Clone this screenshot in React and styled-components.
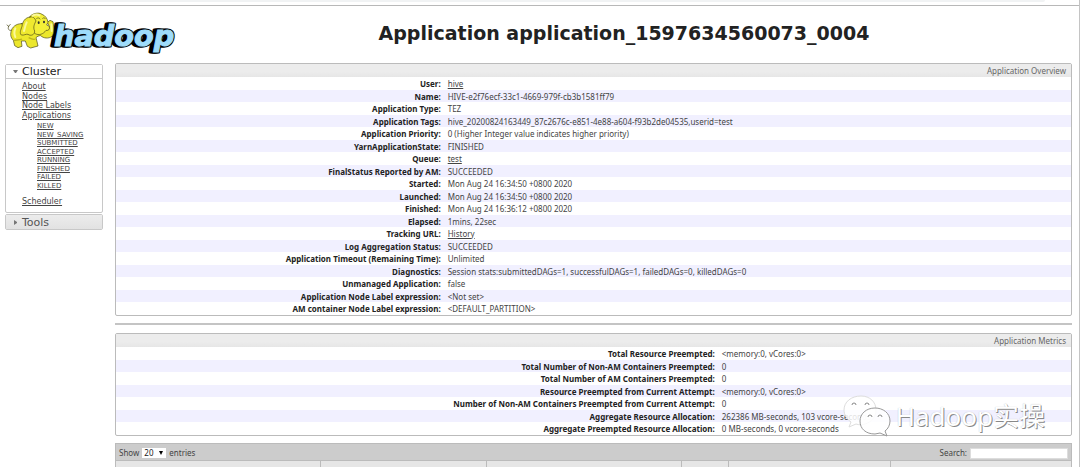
import React from "react";
import styled, { createGlobalStyle } from "styled-components";

const Global = createGlobalStyle`
  * { box-sizing: border-box; }
  body {
    margin: 0;
    background: #fff;
    color: #444;
    font: 8px/12px "Noto Sans", "Noto Sans CJK SC", sans-serif;
  }
  a { color: inherit; text-decoration: underline; }
  ul { list-style: none; margin: 0; padding: 0; }
`;

const Page = styled.div`
  position: relative;
  border-right: 1px solid #c4c4c4;
`;

const BrowserEdge = styled.div`
  height: 6px;
  padding: 0 34px 0 60px;
  border-bottom: 1px solid #b8b8b8;
`;

const AddressBar = styled.div`
  height: 2px;
  border-radius: 0 0 4px 4px;
  background: #f1f3f4;
`;

const Header = styled.header`
  display: grid;
  grid-template-columns: 164px 1fr;
  align-items: center;
  height: 57px;
  padding: 0 0 4px 5px;
`;

const Logo = styled.svg`
  display: block;
  width: 172px;
  height: 44px;
`;

const Title = styled.h1`
  margin: 0;
  text-align: center;
  font: bold 19px/24px "DejaVu Sans", sans-serif;
  color: #222;
`;

const Columns = styled.div`
  display: grid;
  grid-template-columns: 98px minmax(0, 1fr);
  gap: 12px;
  padding: 0 7px 0 5px;
  align-items: start;
`;

const Sidebar = styled.nav`
  display: flex;
  flex-direction: column;
  gap: 1px;
  padding-top: 1px;
  font-family: "DejaVu Sans", sans-serif;
`;

const Section = styled.section`
  border: 1px solid #c8c8c8;
  border-radius: 2px;
`;

const SectionButton = styled.button`
  display: flex;
  align-items: center;
  gap: 4px;
  width: 100%;
  height: 14px;
  padding: 0 0 0 7px;
  border: 0;
  border-bottom: ${(p) => (p.$open ? "1px solid #c8c8c8" : "0")};
  background: ${(p) => (p.$open ? "#fff" : "linear-gradient(#ececec, #e2e2e2)")};
  color: ${(p) => (p.$open ? "#222" : "#555")};
  font: 11px/13px "DejaVu Sans", sans-serif;
`;

const Arrow = styled.svg`
  width: 5px;
  height: 5px;
  fill: #777;
`;

const MenuList = styled.ul`
  padding: 3px 0 5px 16px;
  font-size: 8px;
`;

const MenuItem = styled.li`
  line-height: 10px;
  &:nth-child(even) { line-height: 9px; }
  &:last-child { line-height: 10px; }
`;

const StateList = styled.ul`
  padding: 2px 0 7px 15px;
  font-size: 7px;
`;

const StateItem = styled.li`
  line-height: 9px;
  &:nth-child(even) { line-height: 8px; }
`;

const Panel = styled.section`
  overflow: hidden;
  border: 1px solid #bbb;
  border-radius: 2px;
  background: #fff;
`;

const PanelTitle = styled.h2`
  margin: 0;
  height: 13px;
  padding: 0 5px;
  background: linear-gradient(#ececec 60%, #e6e6e6);
  text-align: right;
  font: 8px/14px "Noto Sans", sans-serif;
  color: #666;
`;

const InfoTable = styled.table`
  width: 100%;
  table-layout: fixed;
  border-collapse: collapse;
`;

const Label = styled.th`
  width: ${(p) => p.$width};
  padding: 0;
  text-align: right;
  white-space: nowrap;
  line-height: 12px;
  color: #222;
`;

const Value = styled.td`
  padding: 0 0 0 7px;
  white-space: nowrap;
  line-height: 12px;
`;

const InfoRow = styled.tr`
  height: 13px;
  &:nth-child(even) { height: 12px; background: #f1f0ff; }
  &:nth-child(even) > ${Label}, &:nth-child(even) > ${Value} { padding-top: 2px; line-height: 10px; }
`;

const Divider = styled.hr`
  height: 2px;
  margin: 7px 0 8px;
  border: 0;
  background: #c4c4c4;
`;

const Toolbar = styled.div`
  display: flex;
  justify-content: space-between;
  align-items: center;
  height: 17px;
  margin-top: 7px;
  padding: 2px 3px 0;
  border: 1px solid #bbb;
  border-bottom: 0;
  background: #ccc;
`;

const Field = styled.label`
  display: flex;
  align-items: center;
  gap: 3px;
  line-height: 12px;
`;

const SelectWrap = styled.span`
  position: relative;
  display: flex;
`;

const PageSize = styled.select`
  appearance: none;
  width: 24px;
  height: 10px;
  padding: 0 2px;
  border: 0;
  border-radius: 0;
  background: #fff;
  color: #222;
  font: 8px/10px "Noto Sans", sans-serif;
`;

const SelectArrow = styled.svg`
  position: absolute;
  right: 3px;
  top: 3px;
  width: 4px;
  height: 4px;
  pointer-events: none;
`;

const Search = styled.input`
  width: 98px;
  height: 11px;
  padding: 0 2px;
  border: 1px solid #ddd;
  background: #fff;
  font: 8px/10px "Noto Sans", sans-serif;
`;

const AttemptsTable = styled.table`
  width: 100%;
  table-layout: fixed;
  border-collapse: collapse;
`;

const HeadCell = styled.th`
  width: ${(p) => p.$width};
  height: 7px;
  padding: 0;
  border: 1px solid #bbb;
  border-bottom: 0;
  background: #e6e6e6;
`;

const Watermark = styled.div`
  position: absolute;
  right: 34px;
  top: 394px;
  display: flex;
  align-items: center;
  gap: 4px;
  font: 26px/44px "Noto Sans", "Noto Sans CJK SC", sans-serif;
  color: #fff;
  text-shadow: 1px 1px 0 #888, 0 0 1px #bbb;
  white-space: nowrap;
  pointer-events: none;
`;

const WatermarkIcon = styled.svg`
  width: 50px;
  height: 44px;
`;

const STATES = ["NEW", "NEW_SAVING", "SUBMITTED", "ACCEPTED", "RUNNING", "FINISHED", "FAILED", "KILLED"];

const OVERVIEW = [
  ["User", "hive", true],
  ["Name", "HIVE-e2f76ecf-33c1-4669-979f-cb3b1581ff79"],
  ["Application Type", "TEZ"],
  ["Application Tags", "hive_20200824163449_87c2676c-e851-4e88-a604-f93b2de04535,userid=test"],
  ["Application Priority", "0 (Higher Integer value indicates higher priority)"],
  ["YarnApplicationState", "FINISHED"],
  ["Queue", "test", true],
  ["FinalStatus Reported by AM", "SUCCEEDED"],
  ["Started", "Mon Aug 24 16:34:50 +0800 2020"],
  ["Launched", "Mon Aug 24 16:34:50 +0800 2020"],
  ["Finished", "Mon Aug 24 16:36:12 +0800 2020"],
  ["Elapsed", "1mins, 22sec"],
  ["Tracking URL", "History", true],
  ["Log Aggregation Status", "SUCCEEDED"],
  ["Application Timeout (Remaining Time)", "Unlimited"],
  ["Diagnostics", "Session stats:submittedDAGs=1, successfulDAGs=1, failedDAGs=0, killedDAGs=0"],
  ["Unmanaged Application", "false"],
  ["Application Node Label expression", "<Not set>"],
  ["AM container Node Label expression", "<DEFAULT_PARTITION>"],
];

const METRICS = [
  ["Total Resource Preempted", "<memory:0, vCores:0>"],
  ["Total Number of Non-AM Containers Preempted", "0"],
  ["Total Number of AM Containers Preempted", "0"],
  ["Resource Preempted from Current Attempt", "<memory:0, vCores:0>"],
  ["Number of Non-AM Containers Preempted from Current Attempt", "0"],
  ["Aggregate Resource Allocation", "262386 MB-seconds, 103 vcore-seconds"],
  ["Aggregate Preempted Resource Allocation", "0 MB-seconds, 0 vcore-seconds"],
];

const ATTEMPT_COLUMNS = [
  ["Attempt ID", "21.4%"],
  ["Started", "17.4%"],
  ["Node", "20.4%"],
  ["Logs", "4.9%"],
  ["Nodes blacklisted by the app", "17%"],
  ["Nodes blacklisted by the system", "auto"],
];

function Info({ title, rows, labelWidth }) {
  return (
    <Panel>
      <PanelTitle>{title}</PanelTitle>
      <InfoTable>
        <tbody>
          {rows.map(([name, value, link]) => (
            <InfoRow key={name}>
              <Label scope="row" $width={labelWidth}>{name}:</Label>
              <Value>{link ? <a href="#">{value}</a> : value}</Value>
            </InfoRow>
          ))}
        </tbody>
      </InfoTable>
    </Panel>
  );
}

function HadoopLogo() {
  return (
    <Logo viewBox="15 24 516 132" role="img" aria-label="hadoop">
      <defs>
        <text id="wordmark" x="162" y="128" fontFamily="DejaVu Sans" fontWeight="bold" fontStyle="italic" fontSize="86">
          hadoop
        </text>
      </defs>
      <g stroke="#000" strokeWidth="9" strokeLinejoin="round">
        <use href="#wordmark" x="-10" y="2" />
        <use href="#wordmark" x="-5" y="1" />
        <use href="#wordmark" />
      </g>
      <use href="#wordmark" fill="#9edcfb" stroke="#9edcfb" strokeWidth="3" />
      <g stroke="#4a4818" strokeWidth="2" strokeLinejoin="round" strokeLinecap="round">
        <path d="M36 82C26 84 22 78 26 70M26 70l-5-4M26 70l5-6" fill="none" />
        <path
          d="M64 62C48 62 36 72 33 86C30 98 34 106 40 112L44 128L54 134L66 130L64 114L76 114L82 130L92 135L114 129L112 120L108 104C112 100 116 98 122 98C130 106 146 108 156 100C163 90 162 74 159 56L150 52L142 58L148 70C148 80 142 82 136 78C120 70 90 60 64 62Z"
          fill="#ece72c"
        />
        <path d="M88 44C92 32 116 26 126 34C136 38 142 46 144 58L140 66L148 70C150 78 146 84 138 82C130 94 116 98 106 92C96 86 92 70 88 44Z" fill="#f3ef38" />
        <path d="M90 42C74 44 68 56 66 70C62 82 58 90 64 96C72 98 78 92 84 94C92 100 104 96 104 84C98 72 104 62 108 54C104 44 98 40 90 42Z" fill="#efe92f" />
        <path d="M110 46C114 44 118 44 120 48M128 46C131 43 134 44 136 47" fill="none" />
      </g>
      <path d="M80 58C76 66 74 76 72 84M46 76C42 86 42 94 46 102M98 38C106 33 112 33 118 37M154 64L155 84" fill="none" stroke="#fbf99a" strokeWidth="6" strokeLinecap="round" />
      <path d="M42 112C50 110 58 112 66 108M86 104C94 108 102 110 106 108" fill="none" stroke="#b9b11d" strokeWidth="4" />
      <ellipse cx="116" cy="59" rx="3" ry="4" fill="#333" />
      <ellipse cx="132" cy="57" rx="3" ry="4" fill="#333" />
    </Logo>
  );
}

function WeChatMark() {
  return (
    <WatermarkIcon viewBox="0 0 50 44" aria-hidden="true">
      <g fill="#fff" fillOpacity="0.85" strokeLinejoin="round">
        <path d="M19 2C9 2 2 8 2 16c0 5 3 9 7 12l-2 5 7-3c3 1 6 1 9 0 7-2 11-8 11-14C34 8 28 2 19 2Z" stroke="#ddd" />
        <path d="M33 14c-9 0-15 6-15 13 0 8 6 13 15 13l5-1 7 3-2-5c3-2 5-6 5-10 0-8-7-13-15-13Z" stroke="#999" />
      </g>
      <g fill="none" stroke="#888">
        <path d="M10 11a2 2 0 0 1 4 0M23 11a2 2 0 0 1 4 0M26 23a2 2 0 0 1 4 0M36 23a2 2 0 0 1 4 0" />
      </g>
    </WatermarkIcon>
  );
}

export default function App() {
  return (
    <>
      <Global />
      <Page>
        <BrowserEdge><AddressBar /></BrowserEdge>
        <Header>
          <HadoopLogo />
          <Title>Application application_1597634560073_0004</Title>
        </Header>
        <Columns>
          <Sidebar>
            <Section>
              <SectionButton type="button" $open aria-expanded="true">
                <Arrow viewBox="0 0 5 5"><path d="M0 1h5L3 4H2z" /></Arrow>
                Cluster
              </SectionButton>
              <MenuList>
                <MenuItem><a href="#">About</a></MenuItem>
                <MenuItem><a href="#">Nodes</a></MenuItem>
                <MenuItem><a href="#">Node Labels</a></MenuItem>
                <MenuItem>
                  <a href="#">Applications</a>
                  <StateList>
                    {STATES.map((s) => <StateItem key={s}><a href="#">{s}</a></StateItem>)}
                  </StateList>
                </MenuItem>
                <MenuItem><a href="#">Scheduler</a></MenuItem>
              </MenuList>
            </Section>
            <Section>
              <SectionButton type="button" aria-expanded="false">
                <Arrow viewBox="0 0 5 5"><path d="M1 0v5L4 3V2z" /></Arrow>
                Tools
              </SectionButton>
            </Section>
          </Sidebar>
          <main>
            <Info title="Application Overview" rows={OVERVIEW} labelWidth="34%" />
            <Divider />
            <Info title="Application Metrics" rows={METRICS} labelWidth="62.7%" />
            <Toolbar>
              <Field>
                Show
                <SelectWrap>
                  <PageSize defaultValue="20">
                    <option>20</option>
                    <option>50</option>
                    <option>100</option>
                  </PageSize>
                  <SelectArrow viewBox="0 0 4 4"><path d="M0 0h4L2 4z" /></SelectArrow>
                </SelectWrap>
                entries
              </Field>
              <Field>
                Search:
                <Search type="text" />
              </Field>
            </Toolbar>
            <AttemptsTable>
              <thead>
                <tr>
                  {ATTEMPT_COLUMNS.map(([name, width]) => (
                    <HeadCell key={name} scope="col" aria-label={name} $width={width} />
                  ))}
                </tr>
              </thead>
            </AttemptsTable>
          </main>
        </Columns>
        <Watermark>
          <WeChatMark />
          Hadoop实操
        </Watermark>
      </Page>
    </>
  );
}
